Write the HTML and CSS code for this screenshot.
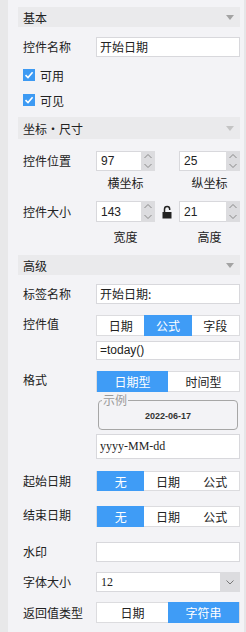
FILE: index.html
```html
<!DOCTYPE html>
<html lang="en">
<head>
    <meta charset="UTF-8">
    <title>控件属性</title>
    <link rel="stylesheet" href="styles.css">
</head>
<body>
    <div class="side"></div>
    <div class="panel">
        <!-- 基本 -->
        <div class="section-head">
            <span>基本</span>
            <svg class="fold" width="8" height="5" viewBox="0 0 8 5"><path d="M0 0H8L4 5Z" fill="#a3a3a3"/></svg>
        </div>
        <div class="row name-row">
            <label class="label">控件名称</label>
            <div class="input">开始日期</div>
        </div>
        <div class="check-row first-check">
            <svg class="check" width="12" height="12" viewBox="0 0 12 12"><rect width="12" height="12" fill="#3d9af3"/><path d="M2.5 6.2L5 8.6L9.6 3.3" stroke="#fff" stroke-width="1.6" fill="none"/></svg>
            <span>可用</span>
        </div>
        <div class="check-row">
            <svg class="check" width="12" height="12" viewBox="0 0 12 12"><rect width="12" height="12" fill="#3d9af3"/><path d="M2.5 6.2L5 8.6L9.6 3.3" stroke="#fff" stroke-width="1.6" fill="none"/></svg>
            <span>可见</span>
        </div>

        <!-- 坐标・尺寸 -->
        <div class="section-head head-pos">
            <span>坐标・尺寸</span>
            <svg class="fold" width="8" height="5" viewBox="0 0 8 5"><path d="M0 0H8L4 5Z" fill="#c4c4c4"/></svg>
        </div>
        <div class="row pos-row">
            <label class="label">控件位置</label>
            <div class="pair">
                <div class="spin">
                    <div class="val">97</div>
                    <div class="arrows">
                        <svg width="14" height="20" viewBox="0 0 14 20"><path d="M3.5 7L7 3.5L10.5 7" stroke="#8a8a8a" fill="none"/><path d="M3.5 13L7 16.5L10.5 13" stroke="#8a8a8a" fill="none"/></svg>
                    </div>
                </div>
                <span></span>
                <div class="spin">
                    <div class="val">25</div>
                    <div class="arrows">
                        <svg width="14" height="20" viewBox="0 0 14 20"><path d="M3.5 7L7 3.5L10.5 7" stroke="#8a8a8a" fill="none"/><path d="M3.5 13L7 16.5L10.5 13" stroke="#8a8a8a" fill="none"/></svg>
                    </div>
                </div>
            </div>
        </div>
        <div class="caption-row">
            <span>横坐标</span>
            <span></span>
            <span>纵坐标</span>
        </div>
        <div class="row size-row">
            <label class="label">控件大小</label>
            <div class="pair">
                <div class="spin">
                    <div class="val">143</div>
                    <div class="arrows">
                        <svg width="14" height="21" viewBox="0 0 14 21"><path d="M3.5 7L7 3.5L10.5 7" stroke="#8a8a8a" fill="none"/><path d="M3.5 14L7 17.5L10.5 14" stroke="#8a8a8a" fill="none"/></svg>
                    </div>
                </div>
                <svg class="lock" width="10" height="14" viewBox="0 0 10 14"><path d="M2.5 7V4.2a2.6 2.6 0 0 1 5.2 0V5" stroke="#222" stroke-width="1.5" fill="none"/><rect x="0.5" y="7" width="9" height="6.5" fill="#222"/></svg>
                <div class="spin">
                    <div class="val">21</div>
                    <div class="arrows">
                        <svg width="14" height="21" viewBox="0 0 14 21"><path d="M3.5 7L7 3.5L10.5 7" stroke="#8a8a8a" fill="none"/><path d="M3.5 14L7 17.5L10.5 14" stroke="#8a8a8a" fill="none"/></svg>
                    </div>
                </div>
            </div>
        </div>
        <div class="caption-row caption-size">
            <span>宽度</span>
            <span></span>
            <span>高度</span>
        </div>

        <!-- 高级 -->
        <div class="section-head head-adv">
            <span>高级</span>
            <svg class="fold" width="8" height="5" viewBox="0 0 8 5"><path d="M0 0H8L4 5Z" fill="#a3a3a3"/></svg>
        </div>
        <div class="row tag-row">
            <label class="label">标签名称</label>
            <div class="input">开始日期:</div>
        </div>
        <div class="row value-row">
            <label class="label top">控件值</label>
            <div class="seg">
                <span>日期</span>
                <span class="on">公式</span>
                <span>字段</span>
            </div>
        </div>
        <div class="row formula-row">
            <span class="label"></span>
            <div class="input latin">=today()</div>
        </div>
        <div class="row format-row">
            <label class="label top">格式</label>
            <div class="seg">
                <span class="on">日期型</span>
                <span>时间型</span>
            </div>
        </div>
        <div class="row sample-row">
            <span class="label"></span>
            <fieldset class="sample">
                <legend>示例</legend>
                <div class="sample-date">2022-06-17</div>
            </fieldset>
        </div>
        <div class="row pattern-row">
            <span class="label"></span>
            <div class="input serif">yyyy-MM-dd</div>
        </div>
        <div class="row start-row">
            <label class="label">起始日期</label>
            <div class="seg short">
                <span class="on">无</span>
                <span>日期</span>
                <span>公式</span>
            </div>
        </div>
        <div class="row end-row">
            <label class="label top">结束日期</label>
            <div class="seg">
                <span class="on">无</span>
                <span>日期</span>
                <span>公式</span>
            </div>
        </div>
        <div class="row mark-row">
            <label class="label">水印</label>
            <div class="input"></div>
        </div>
        <div class="row font-row">
            <label class="label">字体大小</label>
            <div class="select">
                <div class="val serif">12</div>
                <div class="drop">
                    <svg width="20" height="20" viewBox="0 0 20 20"><path d="M6.5 8.5L10 12L13.5 8.5" stroke="#777" fill="none"/></svg>
                </div>
            </div>
        </div>
        <div class="row return-row">
            <label class="label">返回值类型</label>
            <div class="seg">
                <span>日期</span>
                <span class="on">字符串</span>
            </div>
        </div>
    </div>
</body>
</html>
```

FILE: styles.css
```css
body {
    margin: 0;
    padding: 0;
    display: flex;
    height: 632px;
    overflow: hidden;
    background-color: #e6e6e8;
    font-family: "Noto Sans CJK SC", "Liberation Sans", sans-serif;
    font-size: 12px;
    color: #222;
}

.side {
    width: 8px;
    background-color: #e8e8e9;
}

.panel {
    width: 236px;
    box-sizing: border-box;
    padding: 7px 4px 0 10px;
    background-color: #f3f3f6;
}

.section-head {
    height: 20px;
    display: flex;
    align-items: center;
    justify-content: space-between;
    padding: 0 5px 0 5px;
    background-color: #eaeaec;
}

.fold {
    margin-right: 1px;
}

.head-pos {
    margin-top: 11px;
    height: 22px;
}

.head-adv {
    margin-top: 10px;
}

.row {
    display: flex;
    align-items: center;
    padding-left: 5px;
}

.label {
    width: 73px;
    flex: none;
    line-height: 14px;
}

.label.top {
    align-self: flex-start;
    margin-top: 2px;
}

.input {
    width: 144px;
    height: 20px;
    box-sizing: border-box;
    border: 1px solid #d8d8dc;
    background-color: #fff;
    padding-left: 3px;
    line-height: 18px;
}

.latin {
    font-family: "Liberation Sans", Arial, sans-serif;
    font-size: 12px;
}

.serif {
    font-family: "Liberation Serif", "Times New Roman", serif;
    font-size: 12px;
}

.name-row {
    margin-top: 10px;
}

.check-row {
    display: flex;
    align-items: center;
    gap: 5px;
    height: 12px;
    padding-left: 5px;
    margin-top: 13px;
}

.first-check {
    margin-top: 12px;
}

.pair {
    display: grid;
    grid-template-columns: 59px 24px 61px;
    align-items: center;
}

.spin {
    display: flex;
    height: 20px;
}

.size-row .spin {
    height: 21px;
}

.spin .val {
    flex: 1;
    box-sizing: border-box;
    border: 1px solid #d8d8dc;
    border-right: none;
    background-color: #fff;
    padding-left: 4px;
    display: flex;
    align-items: center;
    font-family: "Liberation Sans", Arial, sans-serif;
}

.spin .arrows {
    width: 14px;
    background-color: #dcdcdf;
    display: flex;
}

.lock {
    margin-left: 7px;
}

.pos-row {
    margin-top: 12px;
}

.size-row {
    margin-top: 10px;
}

.caption-row {
    display: grid;
    grid-template-columns: 59px 24px 61px;
    padding-left: 78px;
    margin-top: 4px;
    line-height: 16px;
    font-size: 12px;
}

.caption-row span {
    text-align: center;
}

.caption-size {
    margin-top: 7px;
}

.tag-row {
    margin-top: 9px;
}

.seg {
    width: 144px;
    height: 21px;
    box-sizing: border-box;
    display: flex;
    border: 1px solid #dcdcdf;
    background-color: #fff;
}

.seg.short {
    height: 20px;
}

.seg span {
    flex: 1;
    display: flex;
    align-items: center;
    justify-content: center;
    font-size: 12px;
}

.seg .on {
    background-color: #3f9cf6;
    color: #fff;
    margin: -1px 0;
}

.value-row {
    margin-top: 11px;
}

.formula-row {
    margin-top: 5px;
}

.formula-row .input {
    height: 19px;
    line-height: 17px;
}

.format-row {
    margin-top: 11px;
}

.sample-row {
    margin-top: 2px;
}

.sample {
    width: 140px;
    height: 36px;
    box-sizing: border-box;
    margin: 0 0 0 2px;
    padding: 0;
    border: 1px solid #a6a6a6;
    border-radius: 4px;
}

.sample legend {
    margin-left: 3px;
    padding: 0 1px;
    color: #9a9a9a;
    font-size: 12px;
    line-height: 12px;
}

.sample-date {
    text-align: center;
    font-family: "Liberation Sans", Arial, sans-serif;
    font-size: 9px;
    font-weight: bold;
    line-height: 12px;
    margin-top: 4px;
    color: #333;
}

.pattern-row {
    margin-top: 4px;
}

.pattern-row .input {
    height: 25px;
    line-height: 23px;
}

.start-row {
    margin-top: 12px;
}

.end-row {
    margin-top: 15px;
}

.mark-row {
    margin-top: 15px;
}

.font-row {
    margin-top: 10px;
}

.select {
    width: 144px;
    height: 20px;
    display: flex;
}

.select .val {
    flex: 1;
    box-sizing: border-box;
    border: 1px solid #d8d8dc;
    border-right: none;
    background-color: #fff;
    padding-left: 4px;
    line-height: 18px;
}

.select .drop {
    width: 20px;
    background-color: #dcdcdf;
    display: flex;
}

.return-row {
    margin-top: 10px;
}
```
